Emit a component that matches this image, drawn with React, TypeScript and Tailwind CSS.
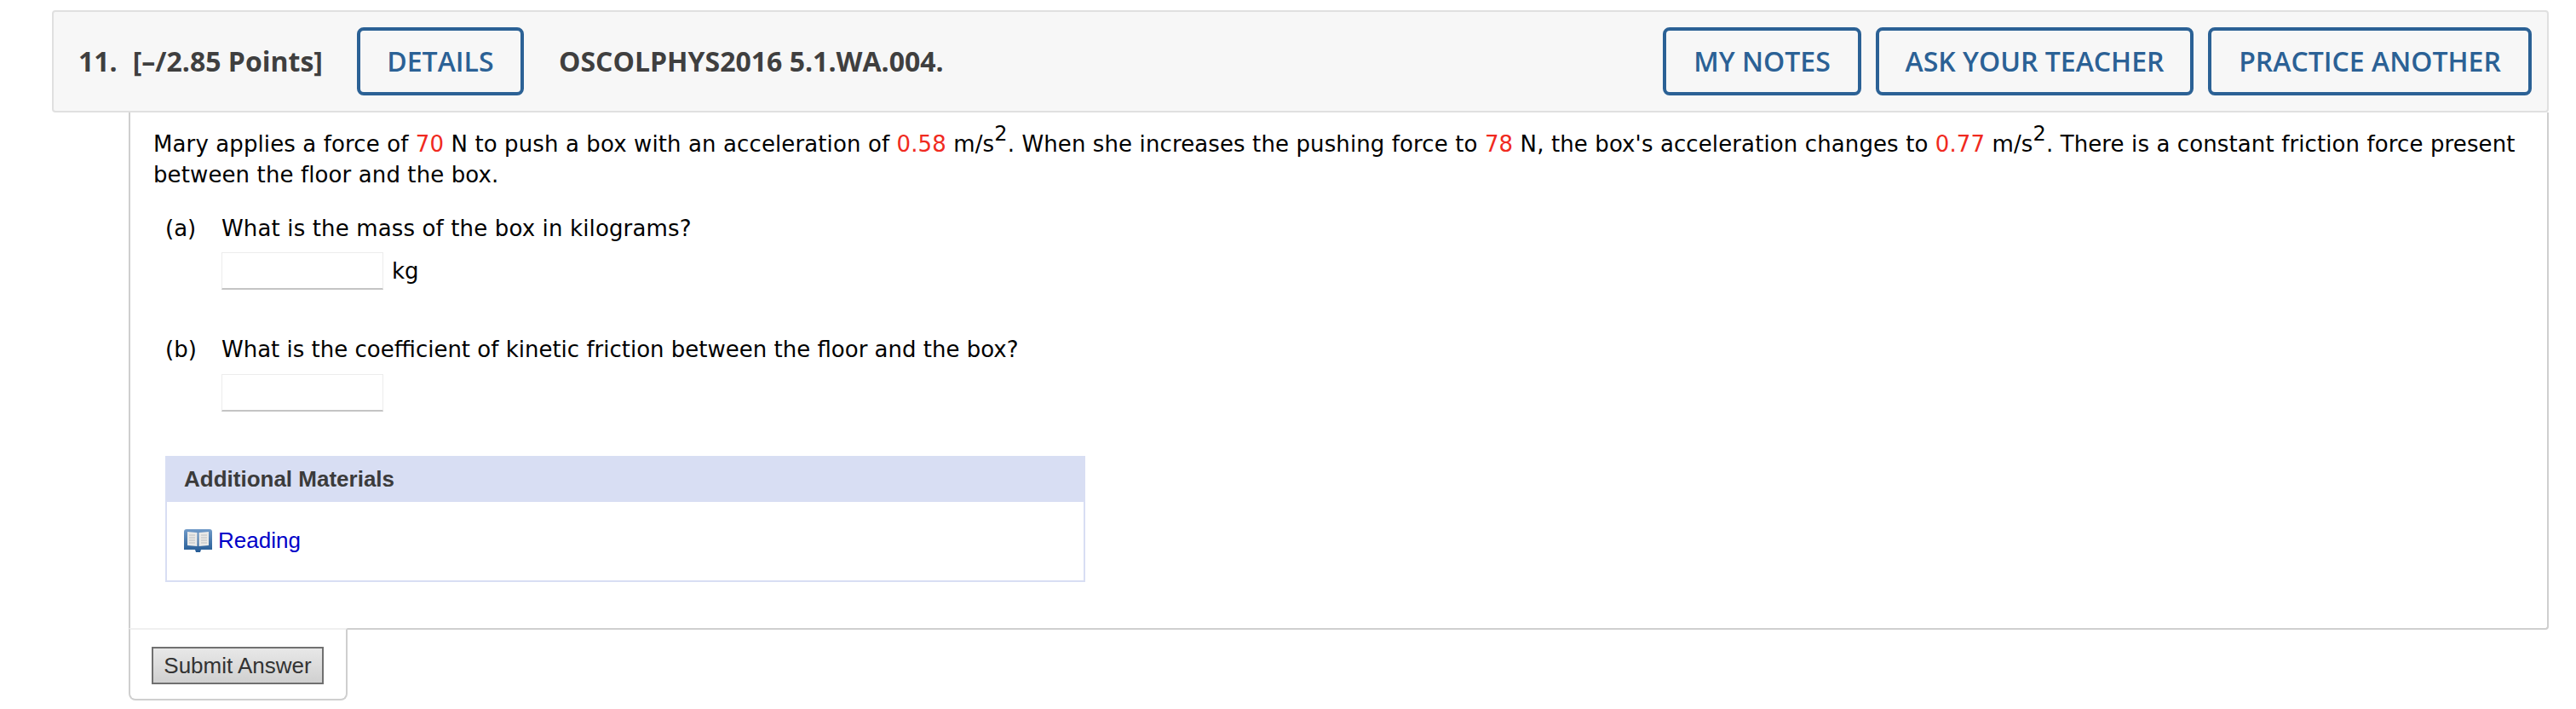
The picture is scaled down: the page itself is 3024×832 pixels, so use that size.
const openSans = "font-['Open_Sans',sans-serif]";

function HeaderButton({ children, className }: { children: string; className: string }) {
  return (
    <button className={`flex h-[80px] items-center justify-center rounded-[8px] border-[4px] border-[#2b6195] text-[32px] font-semibold text-[#2b6195] ${className}`}>
      {children}
    </button>
  );
}

function Red({ children }: { children: string }) {
  return <span className="text-[#f02a20]">{children}</span>;
}

function Sup() {
  return <span className="relative top-[-13px] text-[24px] leading-none">2</span>;
}

function Book() {
  return (
    <svg width="33" height="28" viewBox="0 0 33 28" className="shrink-0">
      <defs>
        <linearGradient id="bookBlue" x1="0" y1="0" x2="0" y2="1">
          <stop offset="0" stopColor="#6f9ac8" />
          <stop offset="1" stopColor="#235a94" />
        </linearGradient>
      </defs>
      <path d="M0 3 Q0 0 3 0 L30 0 Q33 0 33 3 L33 24 L20 24 L19 27 L14 27 L13 24 L0 24 Z" fill="url(#bookBlue)" />
      <path d="M4 3 L15.5 4 L15.5 20 L4 19 Z" fill="#e9e9e7" />
      <path d="M29 3 L17.5 4 L17.5 20 L29 19 Z" fill="#e9e9e7" />
      <path d="M6 7 H13 M6 10 H13 M6 13 H13 M6 16 H13 M20 7 H27 M20 10 H27 M20 13 H27 M20 16 H27" stroke="#bcbfc2" strokeWidth="1.2" />
    </svg>
  );
}

function AnswerInput() {
  return <div className="h-[44px] w-[190px] border border-b-2 border-[#ececec] border-b-[#c4c4c4] bg-white" />;
}

export default function App() {
  return (
    <div className="h-[832px] w-[3024px] bg-white pl-[61px] pt-[12px]">
      <div className={`flex h-[120px] w-[2931px] items-center rounded-[4px] border-2 border-[#e0e0e0] bg-[#f7f7f7] ${openSans} text-[#3f3f3f]`}>
        <span className="ml-[29px] text-[32px] font-bold">11.</span>
        <span className="ml-[18px] text-[32px] font-bold">[–/2.85 Points]</span>
        <HeaderButton className="ml-[40px] w-[196px]">DETAILS</HeaderButton>
        <span className="ml-[41px] text-[32px] font-bold">OSCOLPHYS2016 5.1.WA.004.</span>
        <div className="ml-auto mr-[18px] flex gap-[17px]">
          <HeaderButton className="w-[233px]">MY NOTES</HeaderButton>
          <HeaderButton className="w-[373px]">ASK YOUR TEACHER</HeaderButton>
          <HeaderButton className="w-[380px]">PRACTICE ANOTHER</HeaderButton>
        </div>
      </div>

      <div className="ml-[90px] w-[2841px] font-['DejaVu_Sans',sans-serif] text-[26px] text-black">
        <div className="h-[607px] rounded-br-[4px] border-x-2 border-b-2 border-[#cfcfcf] pl-[27px] pt-[19px]">
          <p className="w-[2800px] leading-[36px] tracking-[0.11px]">
            Mary applies a force of <Red>70</Red> N to push a box with an acceleration of <Red>0.58</Red> m/s<Sup />. When she increases the pushing force to <Red>78</Red> N, the box's acceleration changes to <Red>0.77</Red> m/s<Sup />. There is a constant friction force present between the floor and the box.
          </p>
          <div className="mt-[27px] flex pl-[14px] leading-[36px]">
            <span className="w-[66px]">(a)</span>
            <div>
              <div className="tracking-[0.14px]">What is the mass of the box in kilograms?</div>
              <div className="mt-[10px] flex items-center gap-[10px]">
                <AnswerInput />
                <span>kg</span>
              </div>
            </div>
          </div>
          <div className="mt-[52px] flex pl-[14px] leading-[36px]">
            <span className="w-[66px]">(b)</span>
            <div>
              <div>What is the coefficient of kinetic friction between the floor and the box?</div>
              <div className="mt-[11px]">
                <AnswerInput />
              </div>
            </div>
          </div>
          <div className="ml-[14px] mt-[52px] h-[148px] w-[1080px] border-2 border-t-0 border-[#d8def3] font-['Liberation_Sans',sans-serif]">
            <div className="-mx-[2px] flex h-[54px] items-center bg-[#d8def3] pl-[22px] font-bold text-[#3b3b3b]">Additional Materials</div>
            <div className="mt-[26px] flex items-center gap-[7px] pl-[20px] text-[#0000c8]">
              <Book />
              <span>Reading</span>
            </div>
          </div>
        </div>
        <div className="-mt-[2px] h-[85px] w-[257px] rounded-b-[8px] border-2 border-[#cfcfcf] border-t-[#f0f0f0] bg-white pl-[25px] pt-[20px] font-['Liberation_Sans',sans-serif]">
          <button className="h-[44px] w-[202px] border-2 border-[#707070] bg-gradient-to-b from-[#e8e8e8] to-[#d0d0d0] text-[26px] text-[#333333]">Submit Answer</button>
        </div>
      </div>
    </div>
  );
}
